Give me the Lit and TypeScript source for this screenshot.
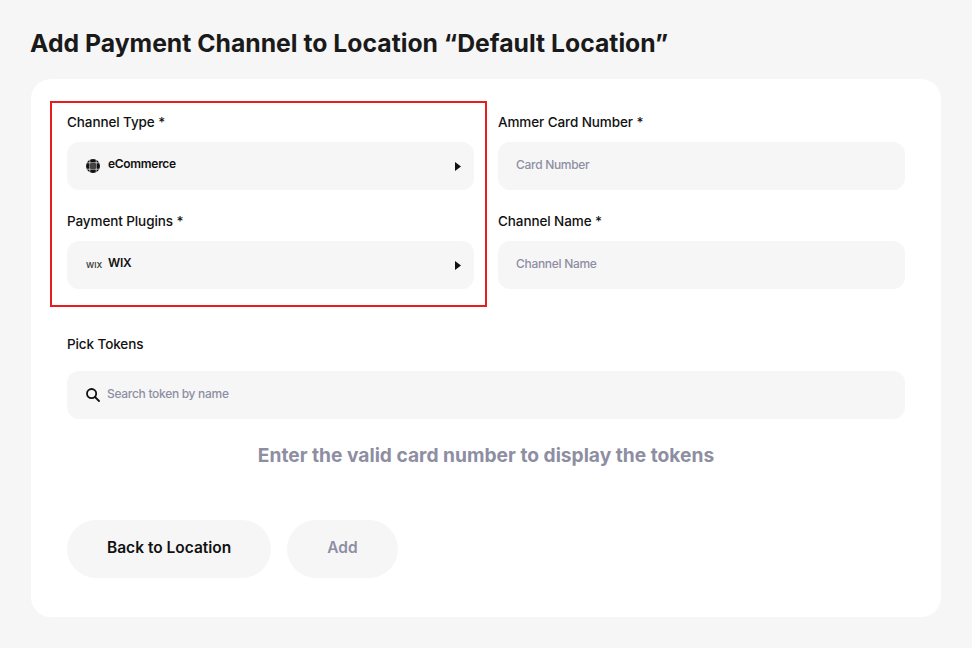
import { LitElement, html, css } from "lit";
import { customElement } from "lit/decorators.js";

const caret = html`<svg class="caret" width="6" height="9" viewBox="0 0 6 9"><path d="M0 0L6 4.5L0 9Z" fill="#111"/></svg>`;
const globe = html`<svg class="ico" width="14" height="14" viewBox="0 0 14 14"><circle cx="7" cy="7" r="7" fill="#111"/><path d="M0 3.8H14M0 10.2H14M3.8 0V14M10.2 0V14" stroke="#f6f6f6" stroke-width="0.7"/><rect x="4.6" y="4.6" width="4.8" height="4.8" fill="#444"/></svg>`;
const search = html`<svg class="search" width="14" height="14" viewBox="0 0 14 14" fill="none" stroke="#111" stroke-width="1.8"><circle cx="5.6" cy="5.6" r="4.6"/><path d="M9 9L13 13" stroke-linecap="round"/></svg>`;

@customElement("app-root")
export class AppRoot extends LitElement {
  static styles = css`
    :host { display: block; width: 972px; height: 648px; background: #f6f6f6; font-family: Inter, "Liberation Sans", sans-serif; color: #111; overflow: hidden; }
    .page { padding: 26px 31px 31px; box-sizing: border-box; }
    h1 { margin: 0 0 19px -1px; font-size: 24.75px; line-height: 34px; font-weight: 700; color: #1a1a1a; white-space: nowrap; }
    .card { background: #fff; border-radius: 20px; padding: 33px 36px 39px; height: 538px; box-sizing: border-box; }
    .grid { display: grid; grid-template-columns: 407px 407px; column-gap: 24px; }
    .col { display: flex; flex-direction: column; gap: 21px; position: relative; }
    .highlight { position: absolute; left: -17px; top: -11px; right: -13px; bottom: -18px; border: 2px solid #e81c1c; pointer-events: none; }
    .field { display: flex; flex-direction: column; gap: 10px; }
    label { font-size: 13.5px; line-height: 20px; font-weight: 500; letter-spacing: -0.1px; }
    .box { height: 48px; background: #f6f6f6; border-radius: 12px; display: flex; align-items: center; box-sizing: border-box; padding: 0 13px 0 19px; font-size: 12px; font-weight: 500; letter-spacing: -0.3px; }
    .box.plain { padding-left: 18px; }
    .box .ico, .box .wix { width: 14px; flex: none; }
    .sel { flex: 1; margin-left: 8px; margin-top: -5px; font-weight: 600; }
    .wix { font-size: 8px; font-weight: 600; color: #444; text-align: center; letter-spacing: 0; }
    .ph { color: #8e8ea3; }
    .txt { margin-top: -3px; }
    .tokens { margin-top: 45px; }
    .tokens .field { gap: 17px; }
    .search { margin-right: 7px; flex: none; }
    .msg { margin: 24px 0 53px; text-align: center; font-size: 19.2px; line-height: 24px; font-weight: 700; color: #8e8ea3; }
    .actions { display: flex; gap: 16px; }
    .btn { height: 58px; border-radius: 29px; background: #f6f6f6; padding: 0 40px; display: flex; align-items: center; font-size: 15.5px; font-weight: 600; color: #111; }
    .btn span { margin-top: -3px; }
    .btn.off { color: #8e8ea3; }
  `;

  render() {
    return html`<div class="page">
      <h1>Add Payment Channel to Location “Default Location”</h1>
      <div class="card">
        <div class="grid">
          <div class="col">
            <div class="highlight"></div>
            <div class="field"><label>Channel Type *</label>
              <div class="box">${globe}<span class="sel">eCommerce</span>${caret}</div></div>
            <div class="field"><label>Payment Plugins *</label>
              <div class="box"><span class="wix">WIX</span><span class="sel">WIX</span>${caret}</div></div>
          </div>
          <div class="col">
            <div class="field"><label>Ammer Card Number *</label>
              <div class="box plain ph"><span class="txt">Card Number</span></div></div>
            <div class="field"><label>Channel Name *</label>
              <div class="box plain ph"><span class="txt">Channel Name</span></div></div>
          </div>
        </div>
        <div class="tokens"><div class="field"><label>Pick Tokens</label>
          <div class="box ph">${search}<span class="txt">Search token by name</span></div></div></div>
        <div class="msg">Enter the valid card number to display the tokens</div>
        <div class="actions"><div class="btn"><span>Back to Location</span></div><div class="btn off"><span>Add</span></div></div>
      </div>
    </div>`;
  }
}
